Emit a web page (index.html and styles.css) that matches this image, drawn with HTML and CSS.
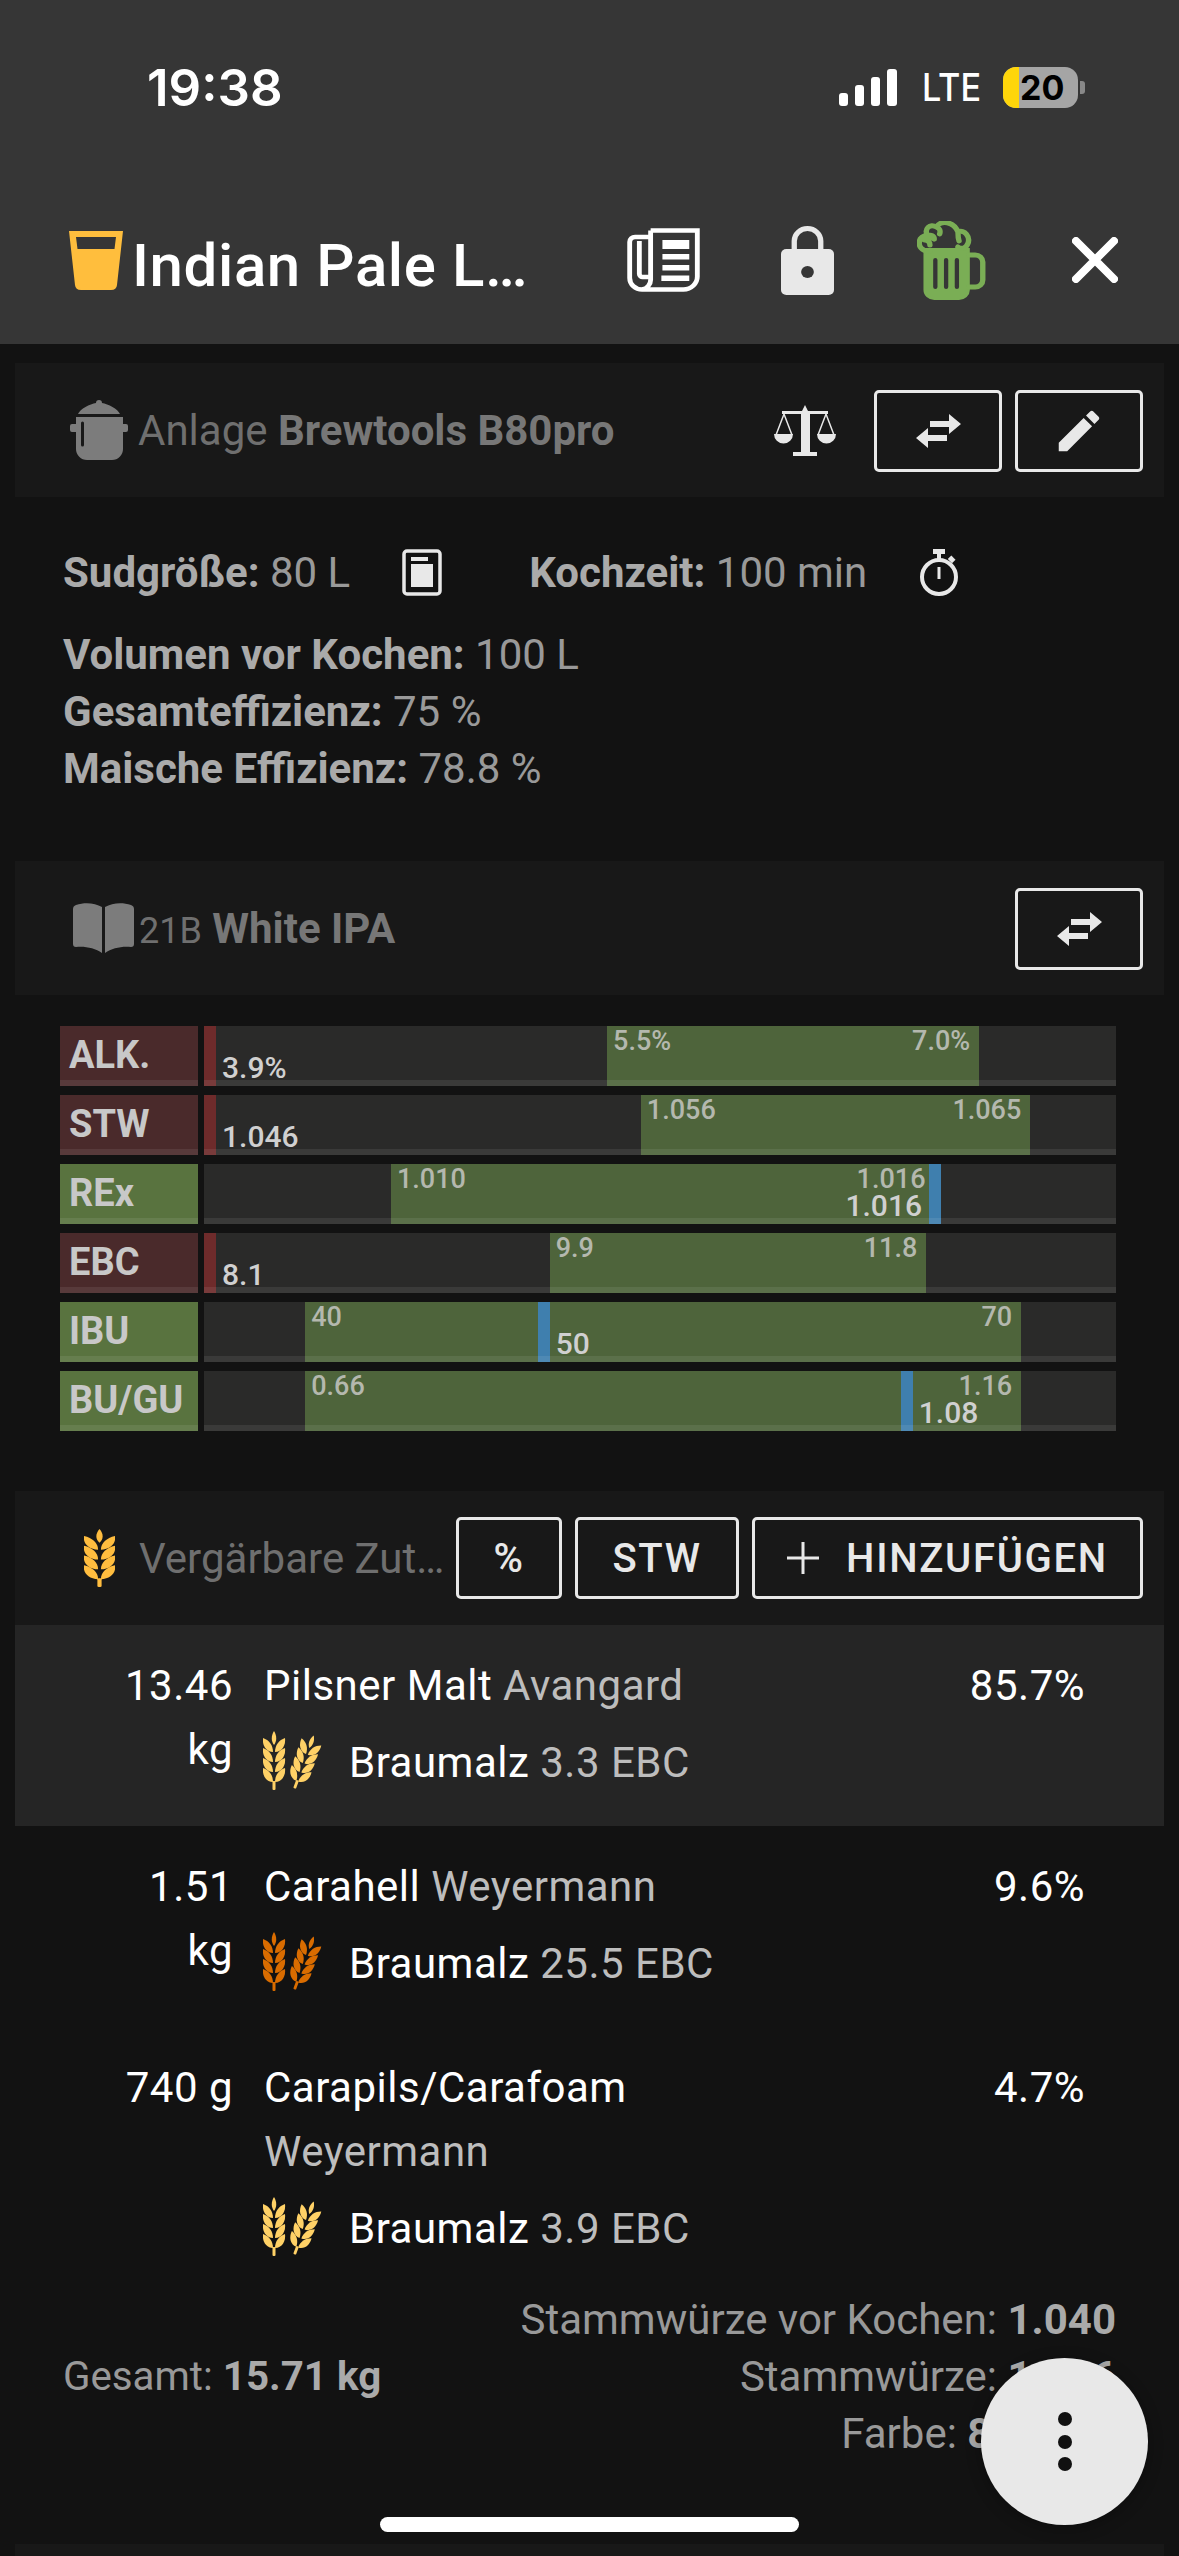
FILE: index.html
```html
<!DOCTYPE html>
<html lang="de">
<head>
    <meta charset="UTF-8">
    <meta name="viewport" content="width=device-width, initial-scale=1.0">
    <title>Indian Pale Lager</title>
    <link rel="stylesheet" href="styles.css">
</head>
<body>
    <!-- shared icons -->
    <svg class="defs" width="0" height="0">
        <defs>
            <g id="spike">
                <path d="M11 0C14 5 14 10 11 14C8 10 8 5 11 0Z"/>
                <g id="grains">
                    <path d="M10 21C3 21 -1 14 0 7C6 9 10 14 10 21Z"/>
                    <path d="M12 21C19 21 23 14 22 7C16 9 12 14 12 21Z"/>
                </g>
                <use href="#grains" y="10"/>
                <use href="#grains" y="20"/>
                <use href="#grains" y="30"/>
                <rect x="9.5" y="50" width="3" height="9" rx="1"/>
            </g>
            <g id="double-wheat">
                <use href="#spike"/>
                <use href="#spike" transform="translate(30 3) rotate(20 11 30) scale(.95)"/>
            </g>
            <path id="swap" d="M14 7h19V0l12 10-12 10v-7H14zM31 21H12v-7L0 24l12 10v-7h19z"/>
        </defs>
    </svg>

    <header class="appbar">
        <div class="statusbar">
            <span class="clock">19:38</span>
            <div class="status-right">
                <svg class="signal" viewBox="0 0 58 37">
                    <rect x="0" y="24" width="9" height="13" rx="3"/>
                    <rect x="16" y="16" width="9" height="21" rx="3"/>
                    <rect x="32" y="8" width="9" height="29" rx="3"/>
                    <rect x="48" y="0" width="10" height="37" rx="3"/>
                </svg>
                <span class="lte">LTE</span>
                <div class="battery"><span class="battery-level"></span><span class="battery-text">20</span></div>
                <span class="battery-nub"></span>
            </div>
        </div>
        <div class="toolbar">
            <svg class="glass" viewBox="0 0 54 59">
                <path fill-rule="evenodd" d="M0 0H54L48 54Q47.500 59 42 59H12Q6.500 59 6 54ZM7 6L8.500 18H45.500L47 6Z"/>
            </svg>
            <h1 class="title">Indian Pale L…</h1>
            <div class="tool">
                <svg class="ic-news" viewBox="0 0 68 64" preserveAspectRatio="none">
                    <path class="line" d="M22 2.500H65.500V48A13 13 0 0 1 52.500 61.500H14A11.500 11.500 0 0 1 2.500 50V14A5 5 0 0 1 7.500 9H22M22 2.500V51A10 10 0 0 1 14 61.500M11.500 13V46A3 3 0 0 0 15 49H22"/>
                    <rect x="33" y="12" width="25" height="9"/>
                    <rect x="33" y="26" width="25" height="5.500"/>
                    <rect x="33" y="37" width="25" height="5.500"/>
                    <rect x="32" y="47.500" width="26" height="5.500"/>
                </svg>
            </div>
            <div class="tool">
                <svg class="ic-lock" viewBox="0 0 50 69" preserveAspectRatio="none">
                    <path class="shackle" d="M12.500 24V15a12.500 12.500 0 0 1 25 0v9"/>
                    <rect x="0" y="23" width="50" height="46" rx="5"/>
                    <circle class="keyhole" cx="25" cy="46" r="6"/>
                </svg>
            </div>
            <div class="tool">
                <svg class="ic-beer" viewBox="0 0 64 79" preserveAspectRatio="none">
                    <path d="M6 27H49V69A10 10 0 0 1 39 79H16A10 10 0 0 1 6 69ZM15 39V66A2 2 0 0 0 19 66V39A2 2 0 0 0 15 39ZM25 39V66A2 2 0 0 0 29 66V39A2 2 0 0 0 25 39ZM35 39V66A2 2 0 0 0 39 66V39A2 2 0 0 0 35 39Z" fill-rule="evenodd"/>
                    <path class="foam" d="M48 34H54A7 7 0 0 1 61 41V59A7 7 0 0 1 54 66H48"/>
                    <path class="foam" d="M12 30C5 31 0 25 3 18C5 15 8 14 10 15C6 8 12 2 18 6C22 -1 34 0 38 11C44 8 50 16 47 23C45 28 41 28 38 26M10 15C13 13 16 15 16 18M7 19C10 19 12 21 12 24M18 6C21 7 22 10 21 13M38 11C38 14 38 17 39 20"/>
                </svg>
            </div>
            <div class="tool">
                <svg class="ic-close" viewBox="0 0 46 46">
                    <path d="M4 4L42 42M42 4L4 42"/>
                </svg>
            </div>
        </div>
    </header>

    <main class="content">
        <section class="panel">
            <svg class="ic-pot muted-ic" viewBox="0 0 58 60">
                <path d="M8 14C10 9 20 4 26 3a3 3 0 0 1 6 0C38 4 48 9 50 14Z"/>
                <path fill-rule="evenodd" d="M6 17H53V24H56a2 2 0 0 1 2 2V30a2 2 0 0 1-2 2H53V49A11 11 0 0 1 42 60H17A11 11 0 0 1 6 49V32H2a2 2 0 0 1-2-2V26a2 2 0 0 1 2-2H6ZM11 23V45A1.500 1.500 0 0 0 14 45V23A1.500 1.500 0 0 0 11 23Z"/>
            </svg>
            <span class="panel-title">Anlage <b>Brewtools B80pro</b></span>
            <svg class="ic-scale" viewBox="0 0 62 51">
                <path d="M31 0L34 6H54V9H36V47H43V51H19V47H27V9H8V6H28Z"/>
                <path class="scale-line" d="M2 30L10 9L18 30M44 30L52 9L60 30"/>
                <path d="M0 29H19A9.500 9.500 0 0 1 0 29ZM43 29H62A9.500 9.500 0 0 1 43 29Z"/>
            </svg>
            <button class="btn btn-icon"><svg class="ic-swap" viewBox="0 0 45 34"><use href="#swap"/></svg></button>
            <button class="btn btn-icon"><svg class="ic-pencil" viewBox="0 0 24 24"><path d="M20.710 7.040C21.100 6.650 21.100 6 20.710 5.630L18.370 3.290C18 2.900 17.350 2.900 16.960 3.290L15.120 5.120L18.870 8.870M3 17.250V21H6.750L17.810 9.930L14.060 6.180L3 17.250Z"/></svg></button>
        </section>

        <section class="info">
            <div class="info-top">
                <span class="info-cell"><b>Sudgröße:</b> 80 L</span>
                <svg class="ic-calc" viewBox="0 0 40 47">
                    <rect class="calc-frame" x="2" y="2" width="36" height="43" rx="3"/>
                    <rect x="9" y="8" width="17" height="4"/>
                    <rect x="9" y="15" width="22" height="23"/>
                </svg>
                <span class="info-cell"><b>Kochzeit:</b> 100 min</span>
                <svg class="ic-watch" viewBox="0 0 40 47">
                    <rect x="14" y="0" width="12" height="5"/>
                    <rect x="18" y="4" width="4" height="6"/>
                    <rect x="30" y="8" width="6" height="5" transform="rotate(45 33 10)"/>
                    <circle class="watch-face" cx="20" cy="28" r="17"/>
                    <rect x="18.500" y="18" width="3" height="12"/>
                </svg>
            </div>
            <p><b>Volumen vor Kochen:</b> 100 L</p>
            <p><b>Gesamteffizienz:</b> 75 %</p>
            <p><b>Maische Effizienz:</b> 78.8 %</p>
        </section>

        <section class="panel panel-style">
            <svg class="ic-book muted-ic" viewBox="0 0 61 50">
                <path d="M0 6Q0 3 3 2C12 -1 22 0 29 4V50C22 45 12 43 3 44Q0 44 0 41Z"/>
                <path d="M61 6Q61 3 58 2C49 -1 39 0 32 4V50C39 45 49 43 58 44Q61 44 61 41Z"/>
            </svg>
            <span class="panel-title panel-title-style"><span class="style-code">21B</span> <b>White IPA</b></span>
            <button class="btn btn-icon"><svg class="ic-swap" viewBox="0 0 45 34"><use href="#swap"/></svg></button>
        </section>

        <section class="bars">
            <div class="bar">
                <div class="bar-label low">ALK.</div>
                <div class="track">
                    <div class="range" style="left:44.2%;width:40.8%"><span>5.5%</span><span>7.0%</span></div>
                    <div class="marker low" style="left:0"><span class="val">3.9%</span></div>
                </div>
            </div>
            <div class="bar">
                <div class="bar-label low">STW</div>
                <div class="track">
                    <div class="range" style="left:47.9%;width:42.7%"><span>1.056</span><span>1.065</span></div>
                    <div class="marker low" style="left:0"><span class="val">1.046</span></div>
                </div>
            </div>
            <div class="bar">
                <div class="bar-label ok">REx</div>
                <div class="track">
                    <div class="range" style="left:20.5%;width:59.6%"><span>1.010</span><span>1.016</span></div>
                    <div class="marker ok" style="left:79.5%"><span class="val val-left">1.016</span></div>
                </div>
            </div>
            <div class="bar">
                <div class="bar-label low">EBC</div>
                <div class="track">
                    <div class="range" style="left:37.9%;width:41.3%"><span>9.9</span><span>11.8</span></div>
                    <div class="marker low" style="left:0"><span class="val">8.1</span></div>
                </div>
            </div>
            <div class="bar">
                <div class="bar-label ok">IBU</div>
                <div class="track">
                    <div class="range" style="left:11.1%;width:78.5%"><span>40</span><span>70</span></div>
                    <div class="marker ok" style="left:36.6%"><span class="val">50</span></div>
                </div>
            </div>
            <div class="bar">
                <div class="bar-label ok">BU/GU</div>
                <div class="track">
                    <div class="range" style="left:11.1%;width:78.5%"><span>0.66</span><span>1.16</span></div>
                    <div class="marker ok" style="left:76.4%"><span class="val">1.08</span></div>
                </div>
            </div>
        </section>

        <section class="panel panel-malts">
            <svg class="ic-wheat" viewBox="0 0 22 59" preserveAspectRatio="none"><use href="#spike"/></svg>
            <span class="panel-title panel-title-light">Vergärbare Zut…</span>
            <button class="btn btn-text btn-pct">%</button>
            <button class="btn btn-text btn-stw">STW</button>
            <button class="btn btn-text btn-add"><svg class="ic-plus" viewBox="0 0 32 32"><path d="M16 0V32M0 16H32"/></svg>HINZUFÜGEN</button>
        </section>

        <section class="malts">
            <div class="malt selected">
                <div class="malt-qty">13.46 kg</div>
                <div class="malt-main">
                    <div class="malt-name">Pilsner Malt <span class="dim">Avangard</span></div>
                    <div class="malt-type">
                        <svg class="ic-malt light" viewBox="0 0 60 62"><use href="#double-wheat"/></svg>
                        <span>Braumalz <span class="dim">3.3 EBC</span></span>
                    </div>
                </div>
                <div class="malt-pct">85.7%</div>
            </div>
            <div class="malt">
                <div class="malt-qty">1.51 kg</div>
                <div class="malt-main">
                    <div class="malt-name">Carahell <span class="dim">Weyermann</span></div>
                    <div class="malt-type">
                        <svg class="ic-malt amber" viewBox="0 0 60 62"><use href="#double-wheat"/></svg>
                        <span>Braumalz <span class="dim">25.5 EBC</span></span>
                    </div>
                </div>
                <div class="malt-pct">9.6%</div>
            </div>
            <div class="malt">
                <div class="malt-qty">740 g</div>
                <div class="malt-main">
                    <div class="malt-name">Carapils/Carafoam <span class="dim">Weyermann</span></div>
                    <div class="malt-type">
                        <svg class="ic-malt light" viewBox="0 0 60 62"><use href="#double-wheat"/></svg>
                        <span>Braumalz <span class="dim">3.9 EBC</span></span>
                    </div>
                </div>
                <div class="malt-pct">4.7%</div>
            </div>
        </section>

        <section class="totals">
            <div class="total-left">Gesamt: <b>15.71 kg</b></div>
            <div class="total-right">
                <div>Stammwürze vor Kochen: <b>1.040</b></div>
                <div>Stammwürze: <b>1.046</b></div>
                <div>Farbe: <b>8.1 EBC</b></div>
            </div>
        </section>

        <section class="panel panel-next"></section>
    </main>

    <button class="fab">
        <svg viewBox="0 0 14 59"><circle cx="7" cy="7" r="7"/><circle cx="7" cy="30" r="7"/><circle cx="7" cy="52" r="7"/></svg>
    </button>
    <div class="home-indicator"></div>
</body>
</html>
```

FILE: styles.css
```css
* {
    box-sizing: border-box;
}
html, body {
    height: 2556px;
    overflow: hidden;
}
body {
    margin: 0;
    background-color: #121212;
    color: #fff;
    font-family: Roboto, "Noto Sans", sans-serif;
    font-size: 42px;
    position: relative;
}
svg {
    display: block;
    flex: none;
}
b {
    font-weight: 700;
}
.defs {
    position: absolute;
}

/* top bar */
.appbar {
    height: 344px;
    background-color: #363636;
}
.statusbar {
    height: 176px;
    padding: 66px 94px 0 147px;
    display: flex;
    justify-content: space-between;
    align-items: flex-start;
}
.clock {
    font-family: Inter, Roboto, sans-serif;
    font-size: 51px;
    font-weight: 600;
    line-height: 44px;
}
.status-right {
    display: flex;
    align-items: center;
}
.signal {
    width: 58px;
    height: 37px;
    fill: #fff;
    margin-right: 25px;
}
.lte {
    font-family: Inter, Roboto, sans-serif;
    font-size: 38px;
    font-weight: 500;
    width: 81px;
    transform: scaleX(.9);
    transform-origin: left center;
    line-height: 42px;
}
.battery {
    width: 75px;
    height: 41px;
    border-radius: 13px;
    background-color: #a5a5a5;
    overflow: hidden;
    display: flex;
    position: relative;
}
.battery-level {
    width: 16px;
    background-color: #ffd60a;
}
.battery-text {
    font-family: Inter, Roboto, sans-serif;
    font-size: 34px;
    font-weight: 700;
    color: #000;
    line-height: 41px;
    margin-left: 1px;
}
.battery-nub {
    width: 5px;
    height: 13px;
    background-color: #888;
    border-radius: 0 3px 3px 0;
    margin-left: 2px;
}
.toolbar {
    height: 168px;
    padding: 0 12px 0 69px;
    display: flex;
    align-items: center;
}
.glass {
    width: 54px;
    height: 59px;
    fill: #ffbe3d;
    margin-right: 9px;
}
.title {
    flex: 1;
    margin: 0;
    padding-top: 10px;
    font-size: 60px;
    font-weight: 500;
    letter-spacing: 0.6px;
    white-space: nowrap;
    color: #fff;
}
.tool {
    width: 144px;
    display: flex;
    justify-content: center;
}
.ic-news {
    width: 73px;
    height: 64px;
    fill: #fff;
}
.ic-news .line {
    fill: none;
    stroke: #fff;
    stroke-width: 4.5;
}
.ic-lock {
    width: 53px;
    height: 69px;
    fill: #e8e8e8;
}
.shackle {
    fill: none;
    stroke: #e8e8e8;
    stroke-width: 5;
}
.keyhole {
    fill: #363636;
}
.ic-beer {
    width: 69px;
    height: 79px;
    fill: #7aae55;
}
.foam {
    fill: none;
    stroke: #7aae55;
    stroke-width: 5;
    stroke-linecap: round;
}
.ic-close {
    width: 46px;
    height: 46px;
    fill: none;
    stroke: #fff;
    stroke-width: 8;
    stroke-linecap: round;
}

/* panels */
.content {
    padding: 19px 15px 0;
}
.panel {
    height: 134px;
    background-color: #181818;
    display: flex;
    align-items: center;
    padding: 0 21px 0 55px;
}
.panel-style {
    margin-top: 64px;
}
.panel-malts {
    margin-top: 60px;
    padding-left: 69px;
}
.panel-next {
    margin-top: 82px;
    height: 40px;
}
.panel-title {
    flex: 1;
    margin-left: 10px;
    color: #6f6f6f;
    white-space: nowrap;
}
.panel-title b {
    color: #777;
}
.panel-title-style {
    margin-left: 5px;
}
.panel-title-light {
    margin-left: 24px;
}
.style-code {
    font-size: 36px;
}
.muted-ic {
    fill: #7c7c7c;
}
.ic-pot {
    width: 58px;
    height: 60px;
}
.ic-book {
    width: 61px;
    height: 50px;
    margin-left: 3px;
}
.ic-scale {
    width: 62px;
    height: 51px;
    fill: #e8e8e8;
    margin-right: 38px;
}
.scale-line {
    fill: none;
    stroke: #e8e8e8;
    stroke-width: 1.5;
}
.btn {
    height: 82px;
    background: none;
    border: 3px solid #e8e8e8;
    border-radius: 5px;
    color: #e8e8e8;
    display: flex;
    align-items: center;
    justify-content: center;
    padding: 0;
    font-family: Roboto, sans-serif;
}
.btn-icon {
    width: 128px;
    margin-top: 2px;
}
.btn-icon + .btn-icon {
    margin-left: 13px;
}
.ic-swap {
    width: 45px;
    height: 34px;
    fill: #e8e8e8;
}
.ic-pencil {
    width: 54px;
    height: 54px;
    fill: #e8e8e8;
}
.btn-text {
    font-size: 40px;
    font-weight: 500;
    letter-spacing: 1.7px;
}
.btn-pct {
    width: 106px;
    margin-right: 13px;
}
.btn-stw {
    width: 164px;
    margin-right: 13px;
}
.btn-add {
    width: 391px;
}
.ic-plus {
    width: 32px;
    height: 32px;
    fill: none;
    stroke: #e8e8e8;
    stroke-width: 3;
    margin-right: 27px;
}
.ic-wheat {
    width: 31px;
    height: 58px;
    fill: #ffbd3f;
}

/* brew info */
.info {
    padding: 52px 0 0 48px;
    color: #999;
}
.info b {
    color: #aaa;
}
.info p {
    margin: 0;
    line-height: 57px;
}
.info-top {
    display: flex;
    align-items: center;
    height: 47px;
    margin-bottom: 30px;
}
.ic-calc {
    width: 40px;
    height: 47px;
    fill: #e8e8e8;
    margin: 0 87px 0 52px;
}
.calc-frame {
    fill: none;
    stroke: #e8e8e8;
    stroke-width: 3.5;
}
.ic-watch {
    width: 40px;
    height: 47px;
    fill: #e8e8e8;
    margin-left: 52px;
}
.watch-face {
    fill: none;
    stroke: #e8e8e8;
    stroke-width: 4;
}

/* style bars */
.bars {
    padding: 31px 48px 0 45px;
}
.bar {
    display: flex;
    gap: 6px;
    height: 60px;
    margin-bottom: 9px;
}
.bar-label,
.track {
    position: relative;
    height: 60px;
}
.bar-label::after,
.track::after {
    content: "";
    position: absolute;
    left: 0;
    right: 0;
    bottom: 0;
    height: 6px;
    background-color: rgba(255, 255, 255, 0.08);
}
.bar-label {
    width: 138px;
    padding-left: 9px;
    font-size: 38px;
    font-weight: 700;
    line-height: 58px;
    color: #c8c8c8;
}
.bar-label.low {
    background-color: #4a2a2b;
}
.bar-label.ok {
    background-color: #59733f;
}
.track {
    flex: 1;
    background-color: #2a2a29;
}
.range {
    position: absolute;
    top: 0;
    bottom: 0;
    background-color: #4e643b;
    display: flex;
    justify-content: space-between;
    padding: 3px 9px 0 6px;
    font-size: 27px;
    font-weight: 500;
    line-height: 24px;
    color: #b4b8ae;
}
.marker {
    position: absolute;
    top: 0;
    bottom: 0;
    width: 12px;
}
.marker.low {
    background-color: #6e2b2b;
}
.marker.ok {
    background-color: #3f7fae;
}
.val {
    position: absolute;
    left: 18px;
    top: 28px;
    font-size: 30px;
    font-weight: 500;
    line-height: 28px;
    color: #d0d0d0;
}
.val-left {
    left: auto;
    right: 19px;
}

/* malts list */
.malt {
    display: flex;
    padding: 29px 79px 30px 102px;
    min-height: 201px;
    letter-spacing: 0.5px;
}
.malt.selected {
    background-color: #252525;
}
.malt-qty {
    width: 116px;
    margin-right: 31px;
    flex: none;
    text-align: right;
    line-height: 64px;
}
.malt-main {
    flex: 1;
}
.malt-name {
    width: 500px;
    line-height: 64px;
}
.malt-type {
    display: flex;
    align-items: center;
    height: 66px;
    margin-top: 11px;
}
.malt-pct {
    line-height: 64px;
}
.dim {
    color: #bdbdbd;
}
.ic-malt {
    width: 60px;
    height: 62px;
    margin-left: -1px;
    margin-right: 26px;
}
.ic-malt.light {
    fill: #ffd166;
}
.ic-malt.amber {
    fill: #d96c00;
}

/* totals */
.totals {
    display: flex;
    justify-content: space-between;
    align-items: center;
    padding: 0 48px 0 48px;
    color: #999;
    line-height: 57px;
}
.totals b {
    color: #aaa;
}
.total-left {
    font-size: 40.3px;
}
.total-right {
    text-align: right;
}

/* floating bits */
.fab {
    position: absolute;
    left: 981px;
    top: 2358px;
    width: 167px;
    height: 167px;
    border-radius: 50%;
    border: none;
    padding: 0;
    background-color: #e8e8e8;
    box-shadow: 0 3px 15px rgba(0, 0, 0, 0.3);
    display: flex;
    align-items: center;
    justify-content: center;
}
.fab svg {
    width: 14px;
    height: 59px;
    fill: #111;
}
.home-indicator {
    position: absolute;
    left: 380px;
    top: 2517px;
    width: 419px;
    height: 15px;
    border-radius: 8px;
    background-color: #fff;
}
```
